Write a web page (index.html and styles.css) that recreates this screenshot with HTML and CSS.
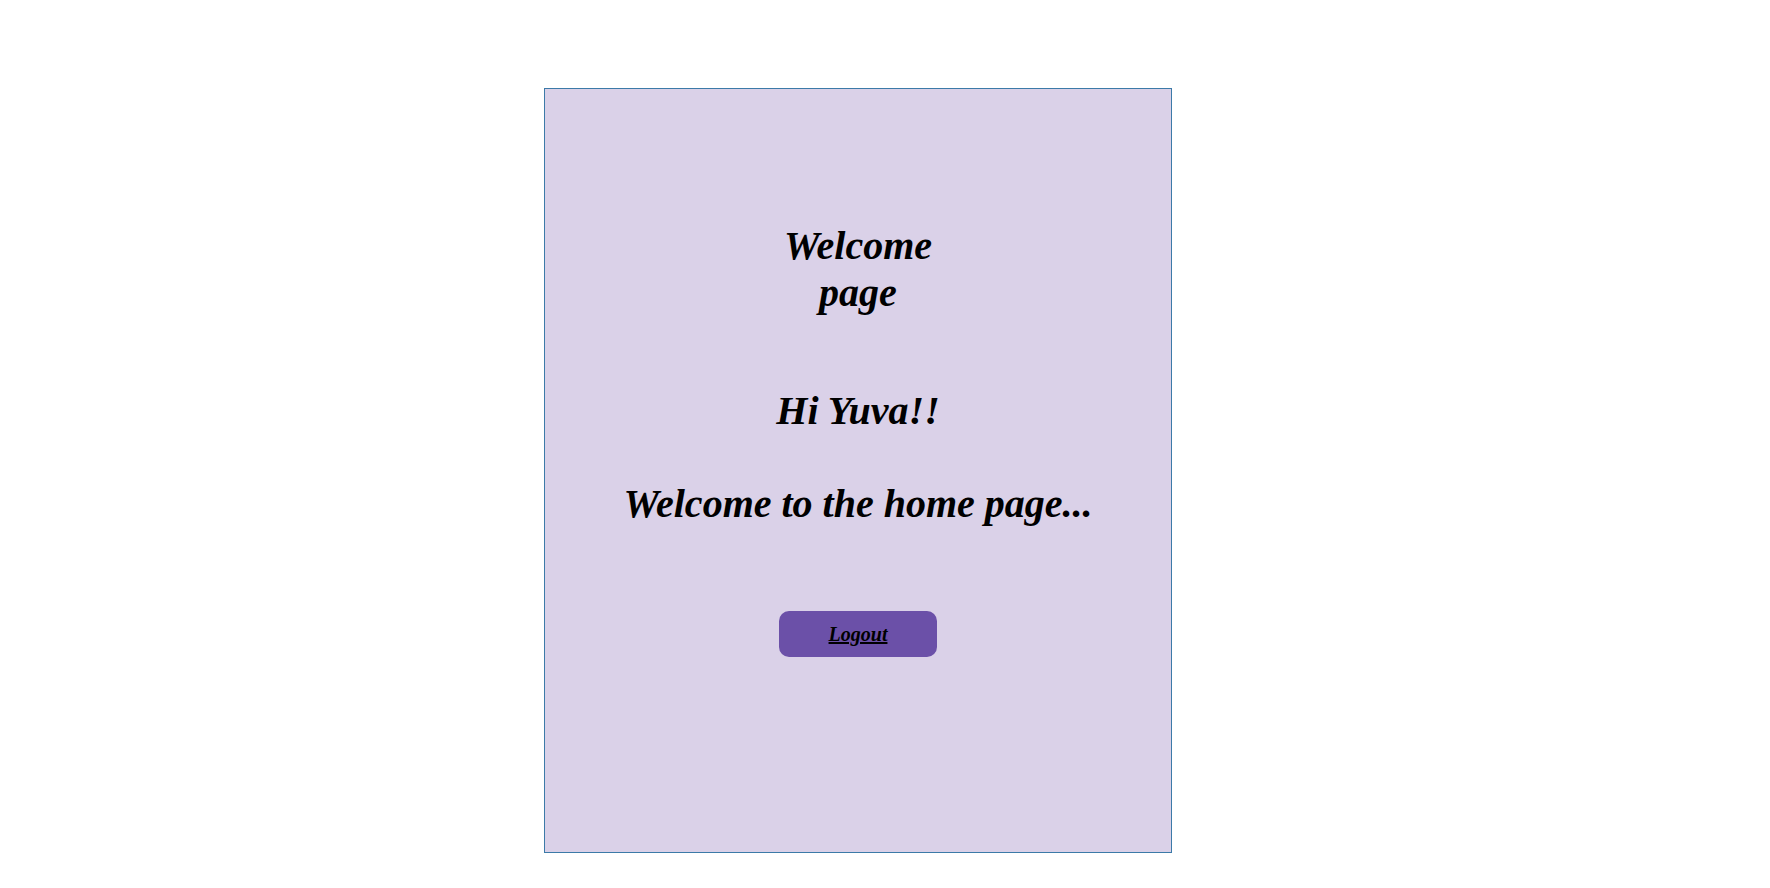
FILE: index.html
```html
<!DOCTYPE html>
<html>
<head>
<meta charset="utf-8">
<title>Welcome</title>
<link rel="stylesheet" href="styles.css">
</head>
<body>
<div class="card">
  <h1 class="title">Welcome page</h1>
  <h1 class="greet">Hi Yuva!!</h1>
  <h1 class="msg">Welcome to the home page...</h1>
  <a class="logout" href="#">Logout</a>
</div>
</body>
</html>
```
FILE: styles.css
```css
html, body {
  margin: 0;
  padding: 0;
  background: #ffffff;
}
body {
  font-family: "Liberation Serif", "Times New Roman", serif;
  font-style: italic;
  font-weight: bold;
  color: #000;
}
.card {
  box-sizing: border-box;
  width: 628px;
  height: 765px;
  margin: 88px 0 0 544px;
  border: 1px solid #3c7aa8;
  background: #dad1e8;
  padding-top: 133px;
  display: flex;
  flex-direction: column;
  align-items: center;
}
.card h1 {
  margin: 0;
  font-size: 40px;
  line-height: 47px;
  text-align: center;
  font-weight: bold;
  font-style: italic;
}
.title {
  width: 200px;
}
.greet {
  margin-top: 71px !important;
}
.msg {
  margin-top: 46px !important;
}
.logout {
  margin-top: 84px;
  width: 158px;
  height: 46px;
  border-radius: 10px;
  background: #6b50a8;
  color: #000;
  font-size: 20px;
  text-decoration: underline;
  display: flex;
  align-items: center;
  justify-content: center;
}
```
